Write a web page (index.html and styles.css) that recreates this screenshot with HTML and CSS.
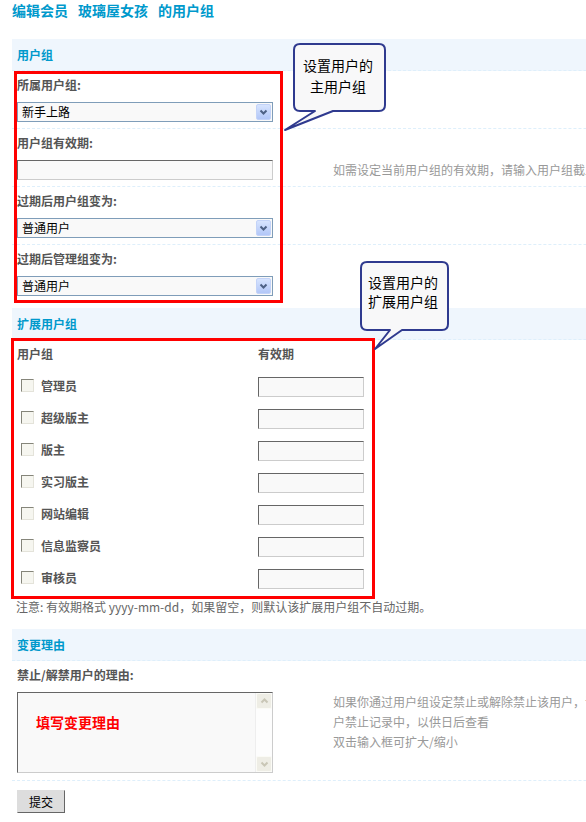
FILE: index.html
```html
<!DOCTYPE html>
<html lang="zh-CN">
<head>
  <meta charset="UTF-8">
  <title>编辑会员 玻璃屋女孩 的用户组</title>
  <link rel="stylesheet" href="styles.css">
</head>
<body>
  <div class="container">
    <h3 class="page-title"><span>编辑会员</span><span>玻璃屋女孩</span><span>的用户组</span></h3>

    <!-- main group -->
    <div class="section">
      <div class="partition">用户组</div>

      <div class="group">
        <div class="label">所属用户组:</div>
        <div class="field">
          <div class="rowform">
            <div class="select"><span>新手上路</span><i class="arrow"><svg width="13" height="14" viewBox="0 0 13 14"><path d="M3.5 5.5 L6.5 8.5 L9.5 5.5" fill="none" stroke="#4d6185" stroke-width="2"/></svg></i></div>
          </div>
        </div>
      </div>

      <div class="group">
        <div class="label">用户组有效期:</div>
        <div class="field">
          <div class="rowform"><div class="txt"></div></div>
          <div class="tips">如需设定当前用户组的有效期，请输入用户组截止日期，否则请留空</div>
        </div>
      </div>

      <div class="group">
        <div class="label">过期后用户组变为:</div>
        <div class="field">
          <div class="rowform">
            <div class="select"><span>普通用户</span><i class="arrow"><svg width="13" height="14" viewBox="0 0 13 14"><path d="M3.5 5.5 L6.5 8.5 L9.5 5.5" fill="none" stroke="#4d6185" stroke-width="2"/></svg></i></div>
          </div>
        </div>
      </div>

      <div class="group last">
        <div class="label">过期后管理组变为:</div>
        <div class="field">
          <div class="rowform">
            <div class="select"><span>普通用户</span><i class="arrow"><svg width="13" height="14" viewBox="0 0 13 14"><path d="M3.5 5.5 L6.5 8.5 L9.5 5.5" fill="none" stroke="#4d6185" stroke-width="2"/></svg></i></div>
          </div>
        </div>
      </div>
    </div>

    <!-- extended groups -->
    <div class="section">
      <div class="partition">扩展用户组</div>
      <div class="ext-head">
        <div class="col-name">用户组</div>
        <div>有效期</div>
      </div>
      <div class="ext-row"><div class="name"><i class="checkbox"></i>管理员</div><div class="txt short"></div></div>
      <div class="ext-row"><div class="name"><i class="checkbox"></i>超级版主</div><div class="txt short"></div></div>
      <div class="ext-row"><div class="name"><i class="checkbox"></i>版主</div><div class="txt short"></div></div>
      <div class="ext-row"><div class="name"><i class="checkbox"></i>实习版主</div><div class="txt short"></div></div>
      <div class="ext-row"><div class="name"><i class="checkbox"></i>网站编辑</div><div class="txt short"></div></div>
      <div class="ext-row"><div class="name"><i class="checkbox"></i>信息监察员</div><div class="txt short"></div></div>
      <div class="ext-row"><div class="name"><i class="checkbox"></i>审核员</div><div class="txt short"></div></div>
      <p class="note">注意: 有效期格式 yyyy-mm-dd，如果留空，则默认该扩展用户组不自动过期。</p>
    </div>

    <!-- reason -->
    <div class="section">
      <div class="partition">变更理由</div>
      <div class="group reason">
        <div class="label">禁止/解禁用户的理由:</div>
        <div class="field">
          <div class="rowform">
            <div class="tarea">
              <div class="tarea-text">填写变更理由</div>
              <div class="scrollbar">
                <i class="sb-btn"><svg width="13" height="14" viewBox="0 0 13 14"><path d="M3.5 8.5 L6.5 5.5 L9.5 8.5" fill="none" stroke="#c9c6b6" stroke-width="2"/></svg></i>
                <i class="sb-btn"><svg width="13" height="14" viewBox="0 0 13 14"><path d="M3.5 5.5 L6.5 8.5 L9.5 5.5" fill="none" stroke="#c9c6b6" stroke-width="2"/></svg></i>
              </div>
            </div>
          </div>
          <div class="tips">如果你通过用户组设定禁止或解除禁止该用户，请输入简短的理由，这将出现在用户禁止记录中，以供日后查看<br>双击输入框可扩大/缩小</div>
        </div>
      </div>
      <div class="submit-row"><button class="btn">提交</button></div>
    </div>
  </div>

  <!-- annotation marks -->
  <div class="mark mark-main"></div>
  <div class="mark mark-ext"></div>

  <svg class="callout callout-main" width="110" height="95" viewBox="0 0 110 95">
    <path d="M20 4 H99 Q105 4 105 10 V65 Q105 71 99 71 H53 L5 90 L35 71 H20 Q14 71 14 65 V10 Q14 4 20 4 Z"/>
    <text x="58" y="31">设置用户的</text>
    <text x="58" y="52">主用户组</text>
  </svg>

  <svg class="callout callout-ext" width="100" height="100" viewBox="0 0 100 100">
    <path d="M12 7 H87 Q93 7 93 13 V69 Q93 75 87 75 H47 L20 94 L35 75 H12 Q6 75 6 69 V13 Q6 7 12 7 Z"/>
    <text x="48" y="33">设置用户的</text>
    <text x="48" y="52">扩展用户组</text>
  </svg>
</body>
</html>
```

FILE: styles.css
```css
html, body {
  margin: 0;
  padding: 0;
  background: #fff;
  overflow: hidden;
}
body {
  position: relative;
  font-family: "Noto Sans CJK SC", "Liberation Sans", sans-serif;
  font-size: 12px;
  color: #555;
}
.container {
  width: 760px;
  padding-left: 12px;
}
.page-title {
  display: flex;
  gap: 10px;
  margin: 0 0 22px;
  padding-top: 3px;
  font-size: 14px;
  line-height: 14px;
  color: #09c;
}

/* section bands */
.partition {
  height: 31px;
  line-height: 31px;
  padding-left: 5px;
  background: #eff6fd;
  border-bottom: 1px dashed #deeffb;
  font-weight: bold;
  color: #09c;
}
.section + .section .partition {
  margin-top: 6px;
}

/* label + field rows */
.group {
  border-bottom: 1px dashed #deeffb;
}
.group.last {
  border-bottom: 0;
}
.label {
  padding: 6px 0 0 5px;
  line-height: 15px;
  font-weight: bold;
}
.field {
  display: flex;
  align-items: flex-start;
  padding: 10px 0 6px 5px;
}
.rowform {
  width: 316px;
  flex: none;
}
.tips {
  width: 432px;
  line-height: 20px;
  color: #999;
}

/* form controls */
.select {
  box-sizing: border-box;
  display: flex;
  align-items: center;
  justify-content: space-between;
  width: 256px;
  height: 20px;
  padding-left: 4px;
  border: 1px solid #7f9db9;
  background: #f9f9f9;
  color: #000;
  line-height: 18px;
}
.arrow {
  box-sizing: border-box;
  display: flex;
  align-items: center;
  justify-content: center;
  width: 15px;
  height: 16px;
  margin-right: 1px;
  border: 1px solid #c3d3f8;
  border-radius: 2px;
  background: linear-gradient(#d7e4fe, #b2c7f8);
}
.txt {
  box-sizing: border-box;
  width: 256px;
  height: 20px;
  border: 1px solid;
  border-color: #666 #ccc #ccc #666;
  background: #f9f9f9;
}
.txt.short {
  width: 106px;
}

/* extended group list */
.ext-head {
  display: flex;
  height: 32px;
  padding-left: 5px;
  line-height: 28px;
  font-weight: bold;
}
.col-name {
  width: 241px;
}
.ext-row {
  display: flex;
  height: 32px;
  padding-left: 5px;
}
.ext-row .name {
  display: flex;
  align-items: center;
  width: 237px;
  height: 26px;
  padding-left: 4px;
  font-weight: bold;
}
.ext-row .txt {
  margin-top: 5px;
}
.checkbox {
  box-sizing: border-box;
  width: 13px;
  height: 13px;
  margin-right: 7px;
  border: 1px solid;
  border-color: #85857a #e4e3da #e4e3da #85857a;
  background: #f6f6f0;
}
.note {
  margin: 0;
  padding: 2px 0 2px 4px;
  line-height: 18px;
  color: #666;
}
.note + .partition,
.section + .section .note ~ .partition {
  margin-top: 0;
}
.section:last-child .partition {
  margin-top: 11px;
}

/* reason textarea */
.reason .field {
  padding-bottom: 7px;
}
.tarea {
  box-sizing: border-box;
  display: flex;
  width: 256px;
  height: 81px;
  border: 1px solid;
  border-color: #666 #ccc #ccc #666;
  background: #f9f9f9;
}
.tarea-text {
  flex: 1;
  padding: 21px 0 0 18px;
  font-size: 14px;
  line-height: 16px;
  font-weight: bold;
  color: #f00;
}
.scrollbar {
  display: flex;
  flex-direction: column;
  justify-content: space-between;
  width: 16px;
  background: #fdfdfd;
  border-left: 1px solid #eee;
}
.sb-btn {
  box-sizing: border-box;
  display: flex;
  align-items: center;
  justify-content: center;
  width: 16px;
  height: 16px;
  border: 1px solid #fbfbf6;
  border-radius: 2px;
  background: #eeede5;
}
.submit-row {
  padding: 9px 0 0 5px;
}
.btn {
  width: 48px;
  height: 23px;
  padding: 0;
  border: 1px solid;
  border-color: #ddd #666 #666 #ddd;
  background: #ddd;
  font-family: "Noto Sans CJK SC", sans-serif;
  font-size: 12px;
  color: #000;
}

/* red frames and speech bubbles */
.mark {
  position: absolute;
  box-sizing: border-box;
  border: 3px solid #f00;
}
.mark-main {
  left: 14px;
  top: 71px;
  width: 269px;
  height: 232px;
}
.mark-ext {
  left: 11px;
  top: 338px;
  width: 364px;
  height: 261px;
}
.callout {
  position: absolute;
}
.callout path {
  fill: #f8f8f9;
  stroke: #2f3a8f;
  stroke-width: 2;
  stroke-linejoin: round;
}
.callout text {
  font-family: "Noto Sans CJK SC", sans-serif;
  font-size: 14px;
  fill: #000;
  text-anchor: middle;
}
.callout-main {
  left: 280px;
  top: 40px;
}
.callout-ext {
  left: 355px;
  top: 255px;
}
```
